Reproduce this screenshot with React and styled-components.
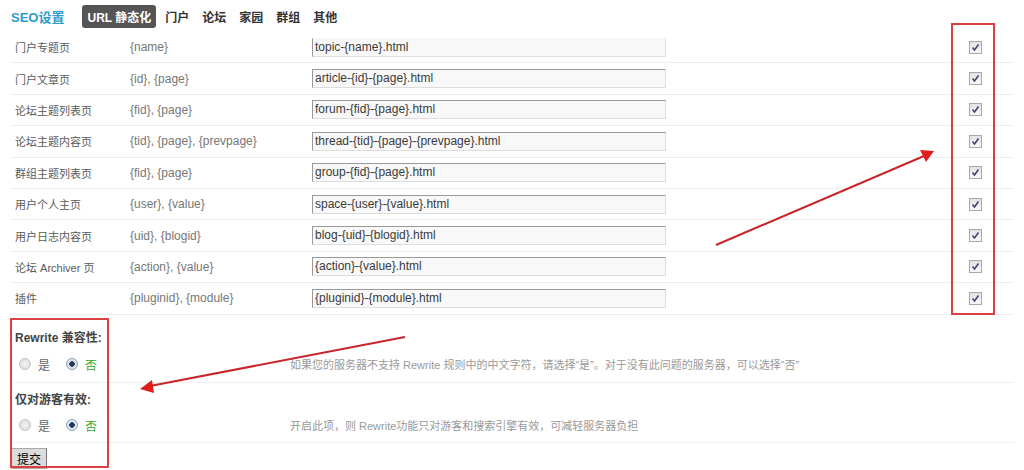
import React from "react";
import styled, { createGlobalStyle } from "styled-components";

const Global = createGlobalStyle`
  html, body { margin: 0; padding: 0; background: #fff; }
  body { font-family: "Liberation Sans", "Noto Sans CJK SC", sans-serif; font-size: 12px; color: #555; }
`;

const Page = styled.div`
  position: relative;
  width: 1024px;
  height: 470px;
  overflow: hidden;
  padding: 0 10px;
  box-sizing: border-box;
`;

const Nav = styled.div`
  height: 33px;
  display: flex;
  align-items: center;
  gap: 13px;
  padding-left: 1px;
`;

const Brand = styled.span`
  font-size: 13px;
  font-weight: bold;
  color: #2e9ccc;
  margin-right: 5px;
`;

const NavItem = styled.span`
  font-size: 12px;
  font-weight: bold;
  color: ${p => (p.$active ? "#fff" : "#333")};
  background: ${p => (p.$active ? "#555" : "transparent")};
  border-radius: 3px;
  padding: ${p => (p.$active ? "3px 5px" : "0")};
  margin-right: ${p => (p.$active ? "-4px" : "0")};
`;

const Rows = styled.div`
  margin-top: -1px;
`;

const Row = styled.div`
  display: grid;
  grid-template-columns: 115px 182px 354px 1fr 30px;
  align-items: center;
  height: 31.4px;
  box-sizing: border-box;
  padding: 0 24px 0 5px;
  border-bottom: 1px solid #eeeeee;
`;

const Label = styled.span`
  color: #5a5a5a;
  font-size: 11px;
`;

const Vars = styled.span`
  color: #777;
`;

const Field = styled.div`
  height: 19px;
  box-sizing: border-box;
  border: 1px solid;
  border-color: ${p => (p.$clipTop ? "transparent" : "#999")} #ddd #ddd #999;
  background: #f8f8f8;
  color: #3a3a3a;
  font-size: 12px;
  line-height: 17px;
  padding-left: 2px;
  white-space: nowrap;
`;

const CheckCell = styled.div`
  display: flex;
  justify-content: center;
`;

const Check = styled.span`
  width: 11px;
  height: 11px;
  border: 1px solid #a8a8a8;
  background: linear-gradient(#e2e2e2, #f8f8f8);
  display: flex;
  align-items: center;
  justify-content: center;
`;

const Title = styled.div`
  padding: 14px 0 0 5px;
  line-height: 18px;
  font-weight: bold;
  color: #444;
`;

const Title2 = styled(Title)`
  padding-top: 8px;
`;

const OptionRow = styled.div`
  display: grid;
  grid-template-columns: 271px 1fr;
  align-items: center;
  height: ${p => p.$h}px;
  padding-left: 9px;
  box-sizing: border-box;
  border-bottom: 1px solid #f0f0f0;
`;

const Radios = styled.div`
  display: flex;
  align-items: center;
`;

const Radio = styled.span`
  width: 10px;
  height: 10px;
  border-radius: 50%;
  border: 1px solid ${p => (p.$on ? "#8aa0b8" : "#c4c4c4")};
  background: ${p =>
    p.$on
      ? "radial-gradient(circle, #1f3a5c 0 2.5px, #dfe6ee 3px)"
      : "radial-gradient(circle, #f4f4f4, #d8d8d8)"};
  margin-right: 7px;
`;

const RadioText = styled.span`
  color: ${p => (p.$green ? "#2fa82f" : "#666")};
  margin-right: ${p => (p.$gap ? 16 : 0)}px;
`;

const Hint = styled.span`
  color: #999;
  font-size: 11px;
`;

const Submit = styled.button`
  margin-top: 5px;
  margin-left: 1px;
  height: 21px;
  padding: 0 5px;
  font-family: "Liberation Sans", "Noto Sans CJK SC", sans-serif;
  font-size: 12px;
  color: #000;
  background: #dcdcdc;
  border: 1px solid #aaa;
  border-right-color: #777;
`;

const Box = styled.div`
  position: absolute;
  border: 2px solid #dd4040;
  box-sizing: border-box;
  pointer-events: none;
`;

const Overlay = styled.svg`
  position: absolute;
  left: 0;
  top: 0;
  pointer-events: none;
`;

const rows = [
  ["门户专题页", "{name}", "topic-{name}.html"],
  ["门户文章页", "{id}, {page}", "article-{id}-{page}.html"],
  ["论坛主题列表页", "{fid}, {page}", "forum-{fid}-{page}.html"],
  ["论坛主题内容页", "{tid}, {page}, {prevpage}", "thread-{tid}-{page}-{prevpage}.html"],
  ["群组主题列表页", "{fid}, {page}", "group-{fid}-{page}.html"],
  ["用户个人主页", "{user}, {value}", "space-{user}-{value}.html"],
  ["用户日志内容页", "{uid}, {blogid}", "blog-{uid}-{blogid}.html"],
  ["论坛 Archiver 页", "{action}, {value}", "{action}-{value}.html"],
  ["插件", "{pluginid}, {module}", "{pluginid}-{module}.html"],
];

const CheckMark = () => (
  <svg width="9" height="9" viewBox="0 0 9 9">
    <path d="M1.5 4.5 L3.5 7 L7.5 1.5" fill="none" stroke="#34466a" strokeWidth="1.5" />
  </svg>
);

const Options = ({ h, hint }) => (
  <OptionRow $h={h}>
    <Radios>
      <Radio />
      <RadioText $gap>是</RadioText>
      <Radio $on />
      <RadioText $green>否</RadioText>
    </Radios>
    <Hint>{hint}</Hint>
  </OptionRow>
);

export default function App() {
  return (
    <>
      <Global />
      <Page>
        <Nav>
          <Brand>SEO设置</Brand>
          <NavItem $active>URL 静态化</NavItem>
          <NavItem>门户</NavItem>
          <NavItem>论坛</NavItem>
          <NavItem>家园</NavItem>
          <NavItem>群组</NavItem>
          <NavItem>其他</NavItem>
        </Nav>
        <Rows>
          {rows.map(([a, b, c], i) => (
            <Row key={i}>
              <Label>{a}</Label>
              <Vars>{b}</Vars>
              <Field $clipTop={i === 0}>{c}</Field>
              <span />
              <CheckCell>
                <Check>
                  <CheckMark />
                </Check>
              </CheckCell>
            </Row>
          ))}
        </Rows>
        <Title>Rewrite 兼容性:</Title>
        <Options
          h={36}
          hint="如果您的服务器不支持 Rewrite 规则中的中文字符，请选择“是”。对于没有此问题的服务器，可以选择“否”"
        />
        <Title2>仅对游客有效:</Title2>
        <Options h={34} hint="开启此项，则 Rewrite功能只对游客和搜索引擎有效，可减轻服务器负担" />
        <Submit>提交</Submit>

        <Box style={{ left: 951, top: 23, width: 44, height: 292 }} />
        <Box style={{ left: 10, top: 318, width: 99, height: 150 }} />
        <Overlay width="1024" height="470" viewBox="0 0 1024 470">
          <line x1="716" y1="245" x2="924" y2="156" stroke="#c8262a" strokeWidth="2" />
          <polygon points="934,151 920,150 926,162" fill="#e01e1e" />
          <line x1="405" y1="337" x2="150" y2="386" stroke="#c8262a" strokeWidth="2" />
          <polygon points="140,389 152,380 154,393" fill="#e01e1e" />
        </Overlay>
      </Page>
    </>
  );
}
